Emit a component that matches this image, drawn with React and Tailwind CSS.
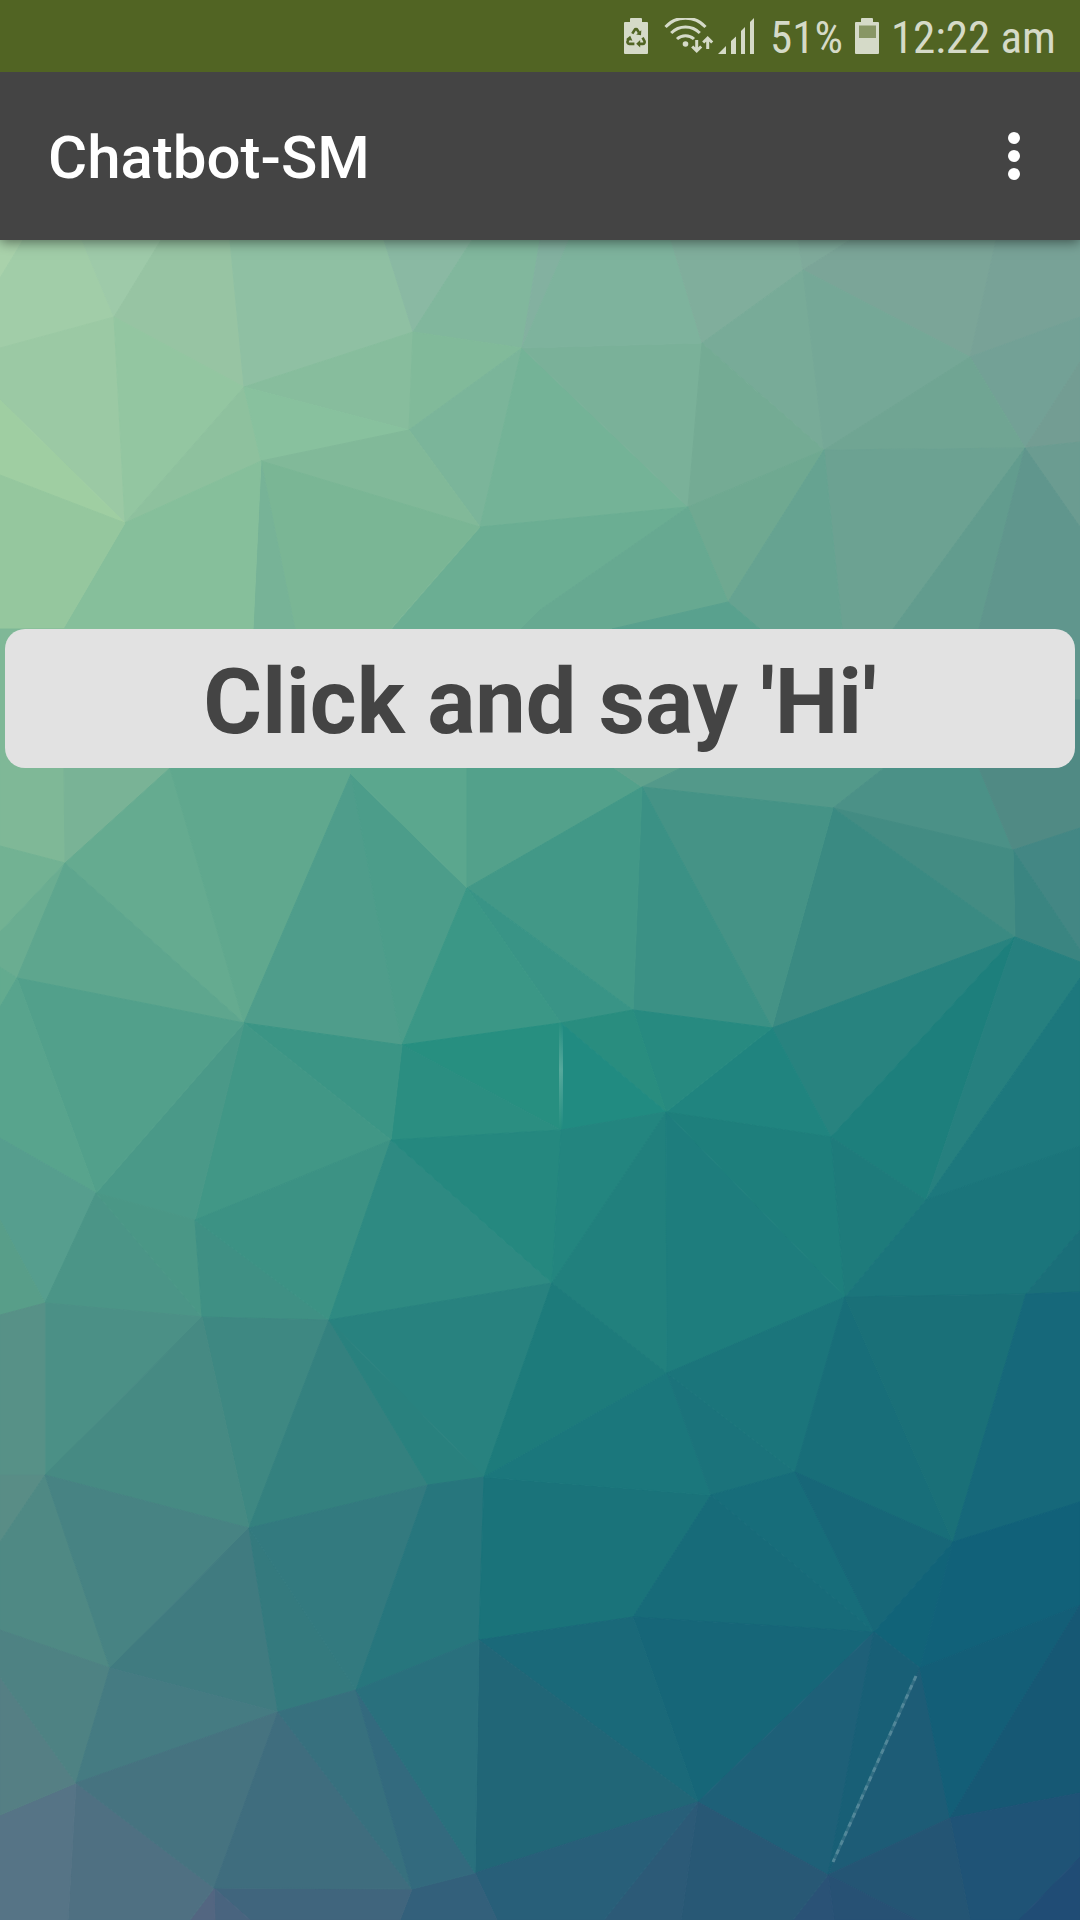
const FACETS = [
  ["0,240 23,240 0,278", "#a9d2ab"],
  ["23,240 82,240 114,317 0,348 0,278", "#a1cda8"],
  ["82,240 161,240 114,317", "#9ecaa9"],
  ["114,317 161,240 230,240 244,387", "#97c4a3"],
  ["0,348 114,317 125,523 0,400", "#9bc9a4"],
  ["0,400 125,523 0,475", "#9fcea2"],
  ["114,317 244,387 125,523", "#93c6a1"],
  ["244,387 261,461 125,523", "#8ec19e"],
  ["230,240 384,240 413,332 244,387", "#8fc0a3"],
  ["384,240 472,240 413,332", "#8ab9a3"],
  ["413,332 472,240 540,240 522,348", "#81b79d"],
  ["540,240 569,240 522,348", "#83b1a0"],
  ["244,387 413,332 409,430", "#87bd9d"],
  ["244,387 409,430 261,461", "#88c19e"],
  ["413,332 522,348 409,430", "#81ba9a"],
  ["409,430 522,348 480,527", "#7bb59a"],
  ["261,461 409,430 480,527", "#81b999"],
  ["522,348 480,527 688,507", "#74b397"],
  ["522,348 688,507 702,343", "#7ab199"],
  ["522,348 569,240 671,240 702,343", "#7eb39d"],
  ["671,240 798,240 803,270 702,343", "#80ae9c"],
  ["798,240 850,240 803,270", "#7faa9b"],
  ["803,270 850,240 996,240 970,357", "#7ba598"],
  ["996,240 1080,240 1080,317 970,357", "#78a297"],
  ["702,343 803,270 824,450", "#78ab98"],
  ["803,270 970,357 824,450", "#75a897"],
  ["970,357 1080,317 1080,362 1025,448", "#73a196"],
  ["1025,448 1080,362 1080,442", "#739d93"],
  ["1025,448 1080,442 1080,527", "#6b9c91"],
  ["824,450 970,357 1025,448", "#70a593"],
  ["702,343 824,450 688,507", "#74ab94"],
  ["688,507 824,450 728,602", "#6fa991"],
  ["824,450 1025,448 893,629 842,629", "#6ca292"],
  ["824,450 842,629 842,700 760,629 728,602", "#66a391"],
  ["1025,448 893,629 979,629", "#629c8e"],
  ["1025,448 979,629 979,700 1080,700 1080,527", "#60968d"],
  ["480,527 688,507 540,610 510,640 382,640", "#6bae93"],
  ["688,507 728,602 612,629 612,640 510,640 540,610", "#67a991"],
  ["728,602 760,629 612,629", "#59a18e"],
  ["261,461 480,527 391,629 295,629", "#7ab695"],
  ["261,461 295,629 253,629", "#77b397"],
  ["125,523 261,461 253,629 63,629", "#86bf9b"],
  ["0,475 125,523 63,629 0,629", "#95c79e"],
  ["0,629 64,629 64,768 65,863 0,846", "#7fb897"],
  ["64,768 170,768 65,863", "#79b396"],
  ["65,863 170,768 244,1023", "#65ab90"],
  ["170,760 351,760 351,774 244,1023 170,768", "#60a88e"],
  ["0,846 65,863 0,932", "#72b293"],
  ["65,863 17,978 0,967 0,932", "#6aad91"],
  ["65,863 17,978 244,1023", "#5ea68e"],
  ["17,978 0,967 0,1007", "#63ab8f"],
  ["351,774 402,1045 244,1023", "#4f9d8b"],
  ["351,774 467,888 402,1045", "#4c9d8a"],
  ["351,760 467,760 467,888 351,774", "#5ba78e"],
  ["467,768 614,768 642,787 467,888", "#53a18b"],
  ["614,768 681,768 642,787", "#60a28d"],
  ["642,787 681,768 884,768 833,808", "#53998a"],
  ["833,808 884,768 979,768 1013,850", "#4b9187"],
  ["979,700 1080,700 1080,828 1013,850 979,768", "#508a84"],
  ["1013,850 1080,828 1080,950", "#438784"],
  ["1013,850 1080,950 1080,962 1015,937", "#3a8581"],
  ["833,808 1013,850 1015,937", "#438c83"],
  ["833,808 1015,937 772,1028", "#3a8a82"],
  ["642,787 833,808 772,1028", "#459386"],
  ["642,787 772,1028 633,1010", "#3b9185"],
  ["467,888 642,787 633,1010", "#429887"],
  ["467,888 633,1010 561,1023", "#399486"],
  ["467,888 561,1023 402,1045", "#3b9786"],
  ["1015,937 772,1028 831,1137", "#28837f"],
  ["1015,937 831,1137 926,1200", "#1d7f7c"],
  ["1015,937 1080,962 1080,978 926,1200", "#26807f"],
  ["1080,978 1080,1146 926,1200", "#1d787d"],
  ["772,1028 831,1137 666,1112", "#20847f"],
  ["633,1010 772,1028 666,1112", "#278a80"],
  ["561,1023 633,1010 666,1112", "#298d7f"],
  ["561,1023 666,1112 561,1130", "#218b81"],
  ["402,1045 561,1023 561,1130", "#278f80"],
  ["402,1045 561,1130 391,1140", "#2b8e81"],
  ["244,1023 402,1045 391,1140", "#3b9585"],
  ["244,1023 391,1140 195,1220", "#419786"],
  ["244,1023 195,1220 96,1193", "#4a9988"],
  ["17,978 244,1023 96,1193", "#52a08b"],
  ["17,978 96,1193 0,1138 0,1007", "#58a48d"],
  ["0,1138 96,1193 45,1303 0,1220", "#569e8e"],
  ["0,1220 45,1303 0,1315", "#589e89"],
  ["96,1193 202,1317 45,1303", "#4b9587"],
  ["96,1193 195,1220 202,1317", "#4a9786"],
  ["195,1220 202,1317 329,1320", "#3f9084"],
  ["195,1220 391,1140 329,1320", "#3c9284"],
  ["391,1140 552,1283 329,1320", "#2e8a82"],
  ["391,1140 561,1130 552,1283", "#25887f"],
  ["561,1130 666,1112 552,1283", "#23857f"],
  ["666,1112 552,1283 667,1373", "#21807d"],
  ["666,1112 667,1373 845,1297", "#1e7d7d"],
  ["666,1112 831,1137 845,1297", "#1e7f7c"],
  ["831,1137 926,1200 845,1297", "#1e7b7b"],
  ["926,1200 1080,1146 1080,1230 1026,1294 845,1297", "#1b757b"],
  ["1026,1294 1080,1230 1080,1292", "#1a6f79"],
  ["552,1283 329,1320 484,1477", "#28827f"],
  ["552,1283 484,1477 667,1373", "#1d7b7b"],
  ["329,1320 202,1317 249,1528", "#3e8882"],
  ["329,1320 249,1528 428,1485", "#34817f"],
  ["329,1320 428,1485 484,1477", "#29817e"],
  ["45,1303 202,1317 45,1475", "#4b9086"],
  ["0,1315 45,1303 45,1475 0,1475", "#579187"],
  ["202,1317 45,1475 249,1528", "#468a83"],
  ["0,1475 45,1475 0,1542", "#598d86"],
  ["45,1475 0,1542 0,1630 110,1668", "#4f8984"],
  ["45,1475 249,1528 110,1668", "#478383"],
  ["249,1528 110,1668 278,1712", "#407b80"],
  ["249,1528 278,1712 356,1690", "#347a7e"],
  ["249,1528 428,1485 356,1690", "#337a7f"],
  ["428,1485 484,1477 479,1640 356,1690", "#27767d"],
  ["484,1477 711,1495 633,1617 479,1640", "#1a737a"],
  ["484,1477 667,1373 711,1495", "#1b777c"],
  ["667,1373 711,1495 795,1472", "#1b737b"],
  ["667,1373 795,1472 845,1297", "#1b757b"],
  ["845,1297 795,1472 953,1542", "#186e79"],
  ["845,1297 1026,1294 953,1542", "#1a7078"],
  ["1026,1294 953,1542 1080,1502 1080,1292", "#16687a"],
  ["711,1495 795,1472 874,1632", "#176d7a"],
  ["711,1495 633,1617 874,1632", "#176b79"],
  ["795,1472 953,1542 874,1632", "#176778"],
  ["953,1542 920,1668 874,1632", "#116378"],
  ["953,1542 1080,1502 1080,1605 920,1668", "#116179"],
  ["633,1617 874,1632 698,1802", "#166678"],
  ["633,1617 698,1802 479,1640", "#1a6979"],
  ["479,1640 698,1802 475,1873", "#216677"],
  ["874,1632 698,1802 828,1875", "#1e6078"],
  ["874,1632 920,1668 828,1875", "#185f76"],
  ["920,1668 828,1875 950,1818", "#1d5c76"],
  ["920,1668 950,1818 1080,1605", "#135e77"],
  ["950,1818 1080,1605 1080,1793", "#165874"],
  ["950,1818 1080,1793 1080,1857 1019,1920 970,1920", "#1f5376"],
  ["1080,1857 1080,1920 1019,1920", "#204c75"],
  ["828,1875 950,1818 970,1920 917,1920", "#245574"],
  ["828,1875 917,1920 834,1920", "#275174"],
  ["828,1875 834,1920 793,1920", "#2a5276"],
  ["698,1802 828,1875 793,1920 681,1920", "#285875"],
  ["698,1802 681,1920 604,1920", "#2c5a77"],
  ["698,1802 604,1920 497,1920 475,1873", "#285f79"],
  ["475,1873 497,1920 400,1920 412,1889", "#33607b"],
  ["412,1889 400,1920 250,1920 214,1888", "#40657d"],
  ["214,1888 250,1920 215,1920", "#49647f"],
  ["214,1888 215,1920 190,1920", "#536681"],
  ["76,1783 214,1888 190,1920 68,1920", "#4f7082"],
  ["76,1783 68,1920 0,1920 0,1815", "#567486"],
  ["76,1783 0,1815 0,1677", "#557f84"],
  ["110,1668 76,1783 0,1677 0,1630", "#4e8283"],
  ["110,1668 278,1712 76,1783", "#457b82"],
  ["76,1783 278,1712 214,1888", "#467380"],
  ["278,1712 412,1889 214,1888", "#3f6d7e"],
  ["278,1712 356,1690 412,1889", "#37707e"],
  ["356,1690 475,1873 412,1889", "#336a7e"],
  ["356,1690 479,1640 475,1873", "#29707d"],
];

function Wallpaper() {
  return (
    <svg
      className="absolute inset-0 h-full w-full"
      viewBox="0 240 1080 1680"
      preserveAspectRatio="none"
      aria-hidden="true"
    >
      <defs>
        <linearGradient id="glint" x1="0" y1="0" x2="0" y2="1">
          <stop offset="0" stopColor="#9fd0c4" stopOpacity="0" />
          <stop offset="0.45" stopColor="#9fd0c4" stopOpacity="0.4" />
          <stop offset="1" stopColor="#9fd0c4" stopOpacity="0" />
        </linearGradient>
      </defs>
      {FACETS.map(([points, color]) => (
        <polygon key={points} points={points} fill={color} stroke={color} strokeWidth="1" strokeLinejoin="round" />
      ))}
      <rect x="559" y="1022" width="4" height="106" fill="url(#glint)" />
      <line x1="916" y1="1676" x2="833" y2="1862" stroke="#8fb4c0" strokeOpacity="0.2" strokeWidth="3" />
      <line
        x1="916"
        y1="1676"
        x2="833"
        y2="1862"
        stroke="#9dbfc9"
        strokeOpacity="0.3"
        strokeWidth="3"
        strokeDasharray="5 5"
      />
    </svg>
  );
}

function RecycleBattery() {
  return (
    <svg className="h-9 w-6" viewBox="0 0 24 36" role="img" aria-label="Power saving">
      <path d="M6 4V1a1 1 0 0 1 1-1h10a1 1 0 0 1 1 1v3h5a1 1 0 0 1 1 1v30a1 1 0 0 1-1 1H1a1 1 0 0 1-1-1V5a1 1 0 0 1 1-1z" fill="#d5dac8" />
      <g fill="none" stroke="#516423" strokeWidth="2.6">
        <path d="M8.3 15.6 10.6 12a1.6 1.6 0 0 1 2.8 0l1.6 2.6" />
        <path d="M18.6 19.6 20.4 23a1.9 1.9 0 0 1-1.8 2.9h-3.2" />
        <path d="M10.4 25.9H5.4A1.9 1.9 0 0 1 3.7 23l1.400-2.500" />
      </g>
      <g fill="#516423">
        <path d="M12.200 16.400 17 17.300 17.300 12.200z" />
        <path d="M16.200 22v7.600L12.200 25.800z" />
        <path d="M2 21.300 6.200 17.800 8.400 22.800z" />
      </g>
    </svg>
  );
}

function WifiTransfer() {
  return (
    <svg className="h-9 w-[50px]" viewBox="0 0 50 36" role="img" aria-label="Wi-Fi">
      <g fill="none" stroke="#d5dac8" strokeWidth="3">
        <path d="M1.500 9A27 27 0 0 1 41.500 9" />
        <path d="M7.200 15A20 20 0 0 1 35.800 15" />
        <path d="M13 21A12.500 12.500 0 0 1 30 21" />
      </g>
      <circle cx="21.500" cy="26" r="2.800" fill="#d5dac8" />
      <g fill="none" stroke="#d5dac8" strokeWidth="3">
        <path d="M32.700 22v11M28.200 28.500l4.500 4.500 4.500-4.500" />
        <path d="M43.700 31V20.500M39.200 24.500l4.500-4.500 4.500 4.500" />
      </g>
    </svg>
  );
}

function Signal() {
  return (
    <svg className="h-9 w-9" viewBox="0 0 36 36" fill="#d5dac8" role="img" aria-label="Signal strength">
      <path d="M0 36 8 28V36zM13 23 18 18.500V36H13zM23 13 27 9V36H23zM32 4 36 0V36H32z" />
    </svg>
  );
}

function Battery() {
  return (
    <svg className="h-9 w-6" viewBox="0 0 24 36" role="img" aria-label="Battery">
      <path d="M6 4V1a1 1 0 0 1 1-1h10a1 1 0 0 1 1 1v3h5a1 1 0 0 1 1 1v30a1 1 0 0 1-1 1H1a1 1 0 0 1-1-1V5a1 1 0 0 1 1-1z" fill="#d5dac8" />
      <path d="M4 7.500h17V20H4z" fill="#889665" />
    </svg>
  );
}

export default function App() {
  return (
    <div className="flex min-h-screen w-full flex-col font-['Roboto',sans-serif]">
      <div className="relative z-20 flex h-[72px] items-center justify-end bg-[#516423] pr-6 font-['Roboto_Condensed','Roboto',sans-serif] text-[45px] leading-[60px] text-[#d5dac8]">
        <RecycleBattery />
        <div className="ml-4 flex items-center gap-1">
          <WifiTransfer />
          <Signal />
        </div>
        <span className="ml-4 pt-1">51%</span>
        <div className="mx-3 flex">
          <Battery />
        </div>
        <span className="pt-1">12:22 am</span>
      </div>

      <header className="relative z-10 flex h-[168px] items-center justify-between bg-[#444444] pl-12 pr-[30px] shadow-[0_2px_12px_rgba(0,0,0,0.5)]">
        <h1 className="pt-1 text-[60px] font-medium leading-[72px] text-white">Chatbot-SM</h1>
        <button type="button" aria-label="More options" className="flex h-[72px] w-[72px] flex-col items-center justify-center gap-1.5">
          <span className="h-3 w-3 rounded-full bg-white" />
          <span className="h-3 w-3 rounded-full bg-white" />
          <span className="h-3 w-3 rounded-full bg-white" />
        </button>
      </header>

      <main className="relative flex-1 px-[5px] pt-[389px]">
        <Wallpaper />
        <button
          type="button"
          className="relative w-full rounded-[20px] bg-[#e2e2e2] pb-3 pt-5 text-center text-[90px] font-bold leading-[107px] text-[#444444]"
        >
          Click and say 'Hi'
        </button>
      </main>
    </div>
  );
}
